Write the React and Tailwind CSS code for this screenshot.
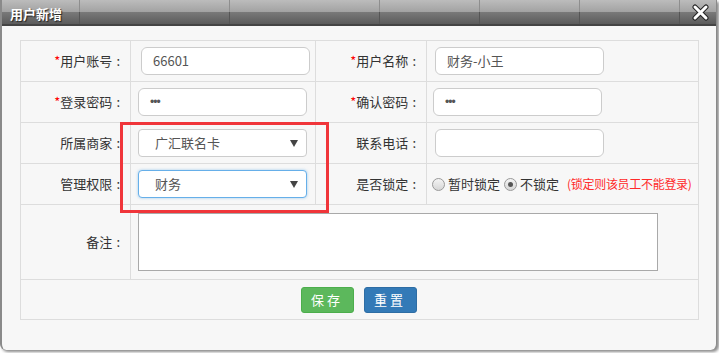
import React from 'react';

const font = { fontFamily: '"Microsoft YaHei", "Noto Sans CJK SC", "Liberation Sans", sans-serif' };

function Label({ req, children }) {
  return (
    <td className="border border-[#dddddd] text-right pr-[10px] text-[13px] text-[#333]">
      {req && <span className="text-[#ff0000]">*</span>}
      {children}
      <span className="ml-[4px]">:</span>
    </td>
  );
}

function TextInput({ value, className = '' }) {
  return (
    <div
      className={`h-[28px] w-[169px] bg-white border border-[#cccccc] rounded-[6px] pl-[11px] flex items-center text-[13px] text-[#555] ${className}`}
    >
      {value}
    </div>
  );
}

function Select({ value, focus, className = '' }) {
  return (
    <div
      className={`h-[28px] w-[169px] bg-white border rounded-[4px] pl-[16px] pr-[8px] flex items-center justify-between text-[13px] text-[#555] ${
        focus ? 'border-[#66afe9] shadow-[0_0_3px_rgba(102,175,233,0.6)]' : 'border-[#cccccc]'
      } ${className}`}
    >
      <span>{value}</span>
      <svg width="8" height="7" viewBox="0 0 8 7">
        <path d="M0 0 H8 L4 7 Z" fill="#444" />
      </svg>
    </div>
  );
}

function Radio({ checked }) {
  return (
    <span className="inline-flex shrink-0 items-center justify-center w-[13px] h-[13px] rounded-full border border-[#9a9a9a] bg-gradient-to-b from-[#f4f4f4] to-[#d6d6d6] mr-[3px]">
      {checked && <span className="w-[5px] h-[5px] rounded-full bg-[#555]" />}
    </span>
  );
}

function Dots() {
  return <span className="font-['Liberation_Sans'] text-[12px] tracking-[-1px]">•••</span>;
}

export default function App() {
  return (
    <div className="relative w-[719px] h-[353px] bg-white overflow-hidden" style={font}>
      <div className="w-[717px] h-[350px] flex flex-col bg-[#f7f7f7] border-l-2 border-r border-[#8a8a8a] rounded-b-[6px] shadow-[2px_2px_3px_rgba(0,0,0,0.45)]">
        {/* header bar */}
        <div className="relative h-[26px] flex flex-col border-b-2 border-[#444]">
          <div className="h-[12px] bg-gradient-to-b from-[#bcbcbc] to-[#a2a2a2] flex">
            <div className="w-[78px] border-r border-[#8e8e8e]" />
            <div className="w-[150px] border-r border-[#8e8e8e]" />
            <div className="w-[150px] border-r border-[#8e8e8e]" />
            <div className="w-[100px] border-r border-[#8e8e8e]" />
            <div className="w-[100px] border-r border-[#8e8e8e]" />
            <div className="w-[100px] border-r border-[#8e8e8e]" />
          </div>
          <div className="flex-1 bg-gradient-to-b from-[#7a7a7a] to-[#5c5c5c] flex">
            <div className="w-[78px] border-r border-[#555]" />
            <div className="w-[150px] border-r border-[#555]" />
            <div className="w-[150px] border-r border-[#555]" />
            <div className="w-[100px] border-r border-[#555]" />
            <div className="w-[100px] border-r border-[#555]" />
            <div className="w-[100px] border-r border-[#555]" />
          </div>
          <div className="absolute left-[8px] top-[4px] text-[13px] font-bold text-white [text-shadow:1px_1px_1px_#222]">
            用户新增
          </div>
          <svg className="absolute left-[690px] top-[4px]" width="17" height="17" viewBox="0 0 17 17">
            <path d="M3 3 L14 14 M14 3 L3 14" stroke="#222" strokeWidth="5" strokeLinecap="round" />
            <path d="M3 3 L14 14 M14 3 L3 14" stroke="#fff" strokeWidth="3" strokeLinecap="round" />
          </svg>
        </div>

        {/* body */}
        <div className="pl-[18px] pt-[14px]">
          <table className="table-fixed w-[678px] border-collapse bg-[#f7f7f7]">
            <colgroup>
              <col className="w-[110px]" />
              <col className="w-[185px]" />
              <col className="w-[111px]" />
              <col className="w-[272px]" />
            </colgroup>
            <tbody>
              <tr className="h-[41px]">
                <Label req>用户账号</Label>
                <td className="border border-[#dddddd] pl-[10px]">
                  <TextInput value="66601" />
                </td>
                <Label req>用户名称</Label>
                <td className="border border-[#dddddd] pl-[8px]">
                  <TextInput value="财务-小王" />
                </td>
              </tr>
              <tr className="h-[41px]">
                <Label req>登录密码</Label>
                <td className="border border-[#dddddd] pl-[7px]">
                  <TextInput value={<Dots />} />
                </td>
                <Label req>确认密码</Label>
                <td className="border border-[#dddddd] pl-[6px]">
                  <TextInput value={<Dots />} />
                </td>
              </tr>
              <tr className="h-[41px]">
                <Label>所属商家</Label>
                <td className="border border-[#dddddd] pl-[7px]">
                  <Select value="广汇联名卡" />
                </td>
                <Label>联系电话</Label>
                <td className="border border-[#dddddd] pl-[8px]">
                  <TextInput value="" />
                </td>
              </tr>
              <tr className="h-[41px]">
                <Label>管理权限</Label>
                <td className="border border-[#dddddd] pl-[7px]">
                  <Select value="财务" focus />
                </td>
                <Label>是否锁定</Label>
                <td className="border border-[#dddddd] pl-[5px] text-[13px] text-[#333]">
                  <div className="flex items-center whitespace-nowrap">
                    <Radio />
                    <span className="mr-[4px]">暂时锁定</span>
                    <Radio checked />
                    <span>不锁定</span>
                    <span className="ml-[8px] text-[#ff2a2a] text-[12px] tracking-[-0.3px]">(锁定则该员工不能登录)</span>
                  </div>
                </td>
              </tr>
              <tr className="h-[75px]">
                <Label>备注</Label>
                <td colSpan={3} className="border border-[#dddddd] pl-[7px]">
                  <div className="w-[520px] h-[58px] bg-white border border-[#a9a9a9]" />
                </td>
              </tr>
              <tr className="h-[40px]">
                <td colSpan={4} className="border border-[#dddddd]">
                  <div className="flex justify-center gap-[10px] pr-[2px]">
                    <button className="w-[53px] h-[26px] rounded-[3px] bg-[#5cb85c] border border-[#4cae4c] text-white text-[13px] tracking-[3px]">
                      保存
                    </button>
                    <button className="w-[53px] h-[26px] rounded-[3px] bg-[#337ab7] border border-[#2e6da4] text-white text-[13px] tracking-[3px]">
                      重置
                    </button>
                  </div>
                </td>
              </tr>
            </tbody>
          </table>
        </div>
      </div>

      {/* annotation box */}
      <div className="absolute left-[120px] top-[122px] w-[209px] h-[91px] border-[3px] border-[#f0353a]" />
    </div>
  );
}
